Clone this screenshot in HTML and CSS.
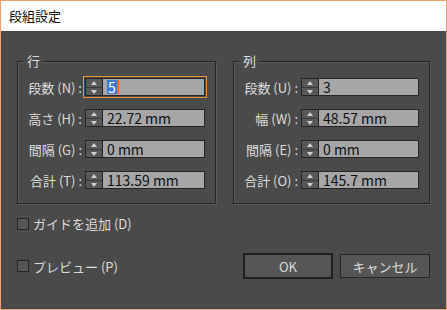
FILE: index.html
```html
<!DOCTYPE html>
<html lang="ja">
<head>
  <meta charset="UTF-8">
  <title>段組設定</title>
  <link rel="stylesheet" href="styles.css">
</head>
<body>

<div class="window">
  <div class="titlebar">段組設定</div>

  <div class="content">
    <div class="groups">
      <div class="group">
        <span class="legend">行</span>
        <div class="row">
          <label>段数 (N) :</label>
          <div class="field focused">
            <span class="spin"><span class="up"></span><span class="down"></span></span>
            <span class="value"><span class="sel">5</span><span class="caret"></span></span>
          </div>
        </div>
        <div class="row">
          <label>高さ (H) :</label>
          <div class="field">
            <span class="spin"><span class="up"></span><span class="down"></span></span>
            <span class="value">22.72 mm</span>
          </div>
        </div>
        <div class="row">
          <label>間隔 (G) :</label>
          <div class="field">
            <span class="spin"><span class="up"></span><span class="down"></span></span>
            <span class="value">0 mm</span>
          </div>
        </div>
        <div class="row">
          <label>合計 (T) :</label>
          <div class="field">
            <span class="spin"><span class="up"></span><span class="down"></span></span>
            <span class="value">113.59 mm</span>
          </div>
        </div>
      </div>

      <div class="group">
        <span class="legend">列</span>
        <div class="row">
          <label>段数 (U) :</label>
          <div class="field">
            <span class="spin"><span class="up"></span><span class="down"></span></span>
            <span class="value">3</span>
          </div>
        </div>
        <div class="row">
          <label>幅 (W) :</label>
          <div class="field">
            <span class="spin"><span class="up"></span><span class="down"></span></span>
            <span class="value">48.57 mm</span>
          </div>
        </div>
        <div class="row">
          <label>間隔 (E) :</label>
          <div class="field">
            <span class="spin"><span class="up"></span><span class="down"></span></span>
            <span class="value">0 mm</span>
          </div>
        </div>
        <div class="row">
          <label>合計 (O) :</label>
          <div class="field">
            <span class="spin"><span class="up"></span><span class="down"></span></span>
            <span class="value">145.7 mm</span>
          </div>
        </div>
      </div>
    </div>

    <div class="check guides"><span class="box"></span>ガイドを追加 (D)</div>

    <div class="footer">
      <div class="check"><span class="box"></span>プレビュー (P)</div>
      <div class="buttons">
        <button class="btn default">OK</button>
        <button class="btn">キャンセル</button>
      </div>
    </div>
  </div>
</div>

</body>
</html>
```

FILE: styles.css
```css
* {
  box-sizing: border-box;
  margin: 0;
  padding: 0;
}
body {
  font-family: "Noto Sans CJK JP", "Noto Sans", sans-serif;
  font-size: 12px;
  background: #4a4a4a;
}
.window {
  width: 447px;
  height: 310px;
  border: 1px solid #f0a072;
  background: #4a4a4a;
  color: #dcdcdc;
  display: flex;
  flex-direction: column;
}
.titlebar {
  height: 30px;
  background: #fff;
  color: #111;
  font-size: 13px;
  line-height: 29px;
  padding-left: 8px;
}
.content {
  flex: 1;
  padding: 30px 16px 0 16px;
}

.groups {
  display: grid;
  grid-template-columns: 199px 197px;
  gap: 17px;
}
.group {
  position: relative;
  border: 1px solid #262626;
  box-shadow: inset 1px 1px 0 #5a5a5a, 1px 1px 0 #5a5a5a;
  height: 143px;
  padding: 16px 0 0 0;
  display: flex;
  flex-direction: column;
  gap: 13px;
}
.legend {
  position: absolute;
  top: -9px;
  left: 6px;
  padding: 0 3px;
  background: #4a4a4a;
  line-height: 16px;
  font-size: 13px;
}
.row {
  display: flex;
  align-items: center;
  height: 18px;
}
.row label {
  width: 64px;
  text-align: right;
  font-size: 13px;
  margin-right: 3px;
  white-space: nowrap;
}

.field {
  display: flex;
  height: 18px;
  width: 120px;
  border: 1px solid #262626;
}
.group + .group .field {
  width: 118px;
}
.field.focused {
  outline: 1px solid #e8913a;
  outline-offset: 1px;
}
.spin {
  width: 17px;
  display: flex;
  flex-direction: column;
  background: #585858;
  border-right: 1px solid #262626;
}
.spin span {
  flex: 1;
  position: relative;
}
.spin .up {
  border-bottom: 1px solid #3a3a3a;
}
.spin .up::after,
.spin .down::after {
  content: "";
  position: absolute;
  left: 5px;
  border-left: 3px solid transparent;
  border-right: 3px solid transparent;
}
.spin .up::after {
  top: 2px;
  border-bottom: 4px solid #d0d0d0;
}
.spin .down::after {
  top: 2px;
  border-top: 4px solid #d0d0d0;
}
.value {
  flex: 1;
  background: #a6a6a6;
  color: #111;
  font-size: 14px;
  line-height: 16px;
  padding-left: 4px;
  display: flex;
  align-items: center;
}
.sel {
  background: #3b7ad9;
  color: #fff;
  line-height: 14px;
  padding: 0 1px;
}
.caret {
  width: 2px;
  height: 14px;
  background: #e8702a;
}

.check {
  display: flex;
  align-items: center;
  font-size: 13px;
}
.check .box {
  width: 12px;
  height: 12px;
  border: 1px solid #262626;
  background: #555;
  margin-right: 4px;
}
.guides {
  margin-top: 10px;
}
.footer {
  display: flex;
  justify-content: space-between;
  align-items: center;
  margin-top: 20px;
}
.buttons {
  display: flex;
  gap: 7px;
  align-items: center;
}
.btn {
  font-family: "Noto Sans CJK JP", "Noto Sans", sans-serif;
  font-size: 13px;
  color: #dcdcdc;
  background: #555;
  border: 1px solid #282828;
  width: 90px;
  height: 24px;
}
.btn.default {
  border: 2px solid #1e1e1e;
  height: 26px;
}
```
